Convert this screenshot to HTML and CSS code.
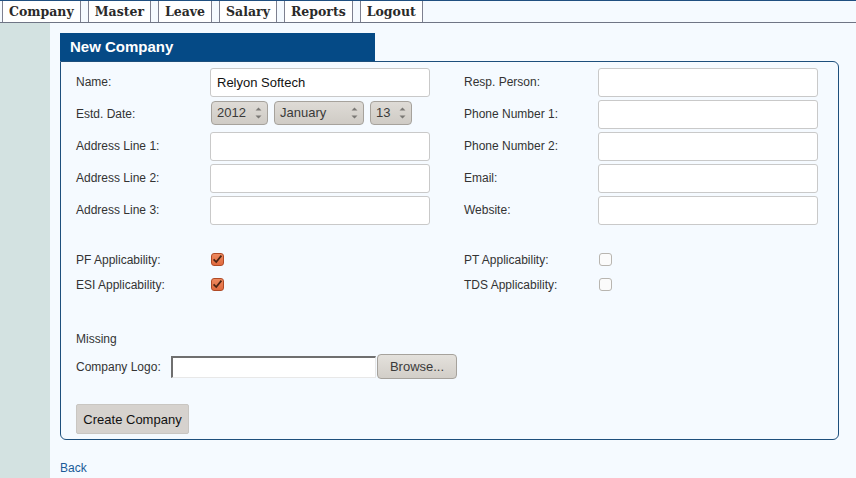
FILE: index.html
```html
<!DOCTYPE html>
<html>
<head>
<meta charset="utf-8">
<link rel="stylesheet" href="styles.css">
</head>
<body>
<nav class="menu">
  <a class="menu-item">Company</a>
  <a class="menu-item">Master</a>
  <a class="menu-item">Leave</a>
  <a class="menu-item">Salary</a>
  <a class="menu-item">Reports</a>
  <a class="menu-item">Logout</a>
</nav>
<div class="page">
  <aside class="sidebar"></aside>
  <main class="main">
    <div class="panel-head">New Company</div>
    <div class="panel">
      <div class="grid">
        <label class="lbl">Name:</label>
        <div class="field"><input class="txt" type="text" value="Relyon Softech"></div>
        <div></div>
        <label class="lbl">Resp. Person:</label>
        <div class="field"><input class="txt" type="text"></div>

        <label class="lbl">Estd. Date:</label>
        <div class="field dates">
          <span class="sel sel-year">2012<svg class="spin" viewBox="0 0 7 14" width="7" height="14"><path d="M0.5 4.5 L3.5 1.5 L6.5 4.5 Z M0.5 9.5 L3.5 12.5 L6.5 9.5 Z" fill="#7a7875"/></svg></span>
          <span class="sel sel-month">January<svg class="spin" viewBox="0 0 7 14" width="7" height="14"><path d="M0.5 4.5 L3.5 1.5 L6.5 4.5 Z M0.5 9.5 L3.5 12.5 L6.5 9.5 Z" fill="#7a7875"/></svg></span>
          <span class="sel sel-day">13<svg class="spin" viewBox="0 0 7 14" width="7" height="14"><path d="M0.5 4.5 L3.5 1.5 L6.5 4.5 Z M0.5 9.5 L3.5 12.5 L6.5 9.5 Z" fill="#7a7875"/></svg></span>
        </div>
        <div></div>
        <label class="lbl">Phone Number 1:</label>
        <div class="field"><input class="txt" type="text"></div>

        <label class="lbl">Address Line 1:</label>
        <div class="field"><input class="txt" type="text"></div>
        <div></div>
        <label class="lbl">Phone Number 2:</label>
        <div class="field"><input class="txt" type="text"></div>

        <label class="lbl">Address Line 2:</label>
        <div class="field"><input class="txt" type="text"></div>
        <div></div>
        <label class="lbl">Email:</label>
        <div class="field"><input class="txt" type="text"></div>

        <label class="lbl">Address Line 3:</label>
        <div class="field"><input class="txt" type="text"></div>
        <div></div>
        <label class="lbl">Website:</label>
        <div class="field"><input class="txt" type="text"></div>
      </div>

      <div class="grid checks">
        <label class="lbl">PF Applicability:</label>
        <div class="cfield"><span class="cb on"><svg viewBox="0 0 13 13" width="13" height="13"><path d="M2.6 6.4 L5.2 9 L10.4 2.6" fill="none" stroke="#4a2414" stroke-width="1.7"/></svg></span></div>
        <div></div>
        <label class="lbl">PT Applicability:</label>
        <div class="cfield"><span class="cb"></span></div>

        <label class="lbl">ESI Applicability:</label>
        <div class="cfield"><span class="cb on"><svg viewBox="0 0 13 13" width="13" height="13"><path d="M2.6 6.4 L5.2 9 L10.4 2.6" fill="none" stroke="#4a2414" stroke-width="1.7"/></svg></span></div>
        <div></div>
        <label class="lbl">TDS Applicability:</label>
        <div class="cfield"><span class="cb"></span></div>
      </div>

      <div class="missing">Missing</div>
      <div class="logo-row">
        <label class="lbl">Company Logo:</label>
        <span class="file-box"></span>
        <span class="browse">Browse...</span>
      </div>

      <div class="submit-row">
        <span class="btn">Create Company</span>
      </div>
    </div>
    <a class="back">Back</a>
  </main>
</div>
</body>
</html>
```

FILE: styles.css
```css
* { box-sizing: border-box; }
html, body { margin: 0; padding: 0; }
body {
  width: 856px;
  height: 478px;
  overflow: hidden;
  background: #f5faff;
  font-family: "Liberation Sans", Arial, sans-serif;
  color: #333;
}
.menu {
  display: flex;
  gap: 7px;
  height: 23px;
  padding-left: 2px;
  border-top: 1px solid #1f4f80;
  border-bottom: 1px solid #6f7585;
  background: #f5faff;
}
.menu-item {
  display: block;
  height: 21px;
  line-height: 22px;
  padding: 0 6px;
  background: #fff;
  border-left: 1px solid #7d8090;
  border-right: 1px solid #7d8090;
  font-family: "DejaVu Serif", serif;
  font-weight: bold;
  font-size: 12.5px;
  color: #2a2a2a;
}
.page {
  display: flex;
  height: 455px;
}
.sidebar {
  width: 50px;
  background: #d3e2e1;
  flex: none;
}
.main {
  padding: 10px 0 0 10px;
  width: 790px;
}
.panel-head {
  width: 315px;
  height: 28px;
  background: #054a86;
  color: #fff;
  font-family: "Liberation Sans", Arial, sans-serif;
  font-weight: bold;
  font-size: 15px;
  line-height: 28px;
  padding-left: 10px;
}
.panel {
  width: 779px;
  height: 379px;
  border: 1px solid #1d4f7c;
  border-radius: 0 6px 6px 6px;
  padding: 6px 0 0 15px;
}
.grid {
  display: grid;
  grid-template-columns: 134px 220px 34px 134px 220px;
  grid-auto-rows: 32px;
}
.lbl {
  font-size: 12px;
  color: #333;
  display: flex;
  align-items: center;
  height: 28px;
}
.field { height: 29px; }
.txt {
  width: 220px;
  height: 29px;
  margin: 0;
  border: 1px solid #c9c9c9;
  border-radius: 3px;
  background: #fff;
  padding: 0 6px;
  font-family: "Liberation Sans", Arial, sans-serif;
  font-size: 13px;
  color: #111;
  outline: none;
}
.dates {
  display: flex;
  gap: 6px;
  padding-top: 1px;
  padding-left: 1px;
}
.sel {
  position: relative;
  display: block;
  height: 24px;
  line-height: 22px;
  border: 1px solid #a6a29c;
  border-radius: 4px;
  background: linear-gradient(#dedbd6, #cfcbc5);
  font-size: 13px;
  color: #3a3a3a;
  padding-left: 5px;
}
.sel-year { width: 57px; }
.sel-month { width: 90px; }
.sel-day { width: 42px; }
.spin {
  position: absolute;
  right: 5px;
  top: 4px;
  display: block;
}
.checks {
  grid-auto-rows: 25px;
  margin-top: 19px;
}
.checks .lbl { height: 25px; }
.cfield {
  display: flex;
  align-items: center;
  padding-left: 1px;
  height: 25px;
}
.cb {
  display: block;
  width: 13px;
  height: 13px;
  border: 1px solid #b8b5b0;
  border-radius: 3px;
  background: #fbfbfb;
}
.cb.on {
  background: linear-gradient(#ee8a60, #e06a3e);
  border-color: #b04a26;
}
.cb svg { display: block; margin: -1px 0 0 -1px; }
.missing {
  font-size: 12px;
  margin-top: 34px;
  height: 16px;
  line-height: 16px;
}
.logo-row {
  display: flex;
  align-items: center;
  margin-top: 7px;
  height: 25px;
}
.logo-row .lbl { width: 95px; height: 25px; }
.file-box {
  display: block;
  width: 205px;
  height: 22px;
  background: #fff;
  border-top: 2px solid #6f6f6f;
  border-left: 2px solid #6f6f6f;
  border-right: 1px solid #e8e8e8;
  border-bottom: 1px solid #e8e8e8;
  margin-top: 1px;
}
.browse {
  display: block;
  width: 80px;
  height: 25px;
  margin-left: 1px;
  border: 1px solid #a6a29c;
  border-radius: 4px;
  background: linear-gradient(#e4e1dc, #d2cec8);
  font-size: 13px;
  color: #3a3a3a;
  text-align: center;
  line-height: 24px;
}
.submit-row { margin-top: 25px; }
.btn {
  display: inline-block;
  width: 113px;
  height: 30px;
  line-height: 29px;
  background: #d6d2ce;
  border: 1px solid #c9c6c2;
  border-radius: 2px;
  font-size: 13px;
  color: #111;
  text-align: center;
}
.back {
  display: block;
  margin-top: 20px;
  font-size: 12px;
  color: #1a5b98;
  height: 16px;
  line-height: 16px;
}
```
